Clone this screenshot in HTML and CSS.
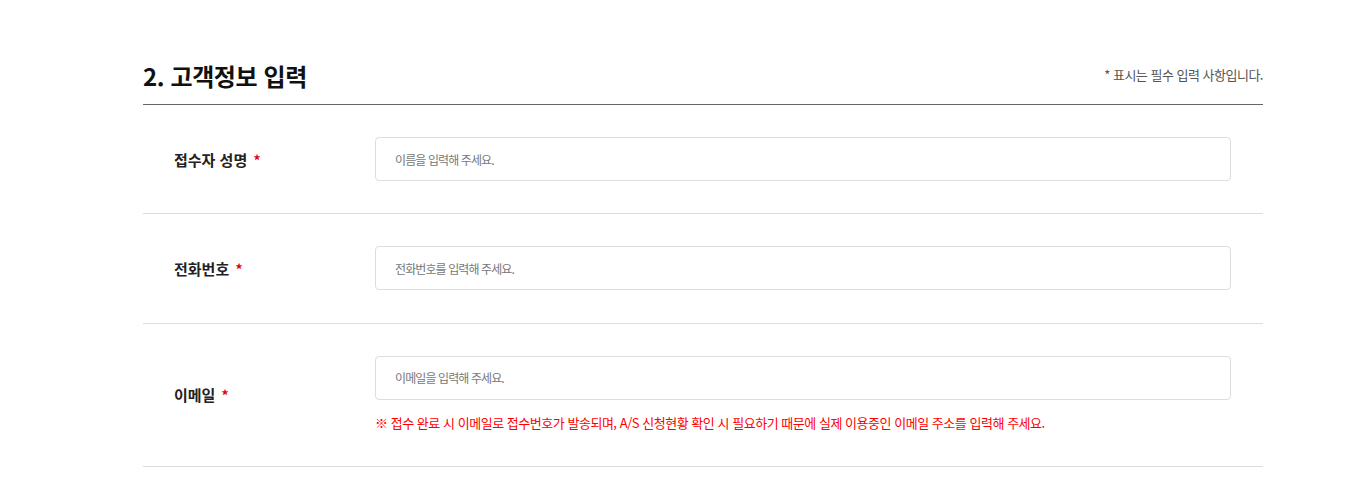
FILE: index.html
```html
<!DOCTYPE html>
<html lang="ko">
<head>
<meta charset="utf-8">
<title>고객정보 입력</title>
<link rel="stylesheet" href="styles.css">
</head>
<body>
<section class="section">
  <div class="section-head">
    <h2 class="section-title">2. 고객정보 입력</h2>
    <p class="section-note">* 표시는 필수 입력 사항입니다.</p>
  </div>
  <div class="form">
    <div class="row">
      <label class="row-label" for="name">접수자 성명 <span class="req">*</span></label>
      <div class="row-field">
        <input class="text-input" id="name" type="text" placeholder="이름을 입력해 주세요.">
      </div>
    </div>
    <div class="row">
      <label class="row-label" for="tel">전화번호 <span class="req">*</span></label>
      <div class="row-field">
        <input class="text-input" id="tel" type="text" placeholder="전화번호를 입력해 주세요.">
      </div>
    </div>
    <div class="row">
      <label class="row-label" for="email">이메일 <span class="req">*</span></label>
      <div class="row-field">
        <input class="text-input" id="email" type="text" placeholder="이메일을 입력해 주세요.">
        <p class="field-note">※ 접수 완료 시 이메일로 접수번호가 발송되며, A/S 신청현황 확인 시 필요하기 때문에 실제 이용중인 이메일 주소를 입력해 주세요.</p>
      </div>
    </div>
  </div>
</section>
</body>
</html>
```

FILE: styles.css
```css
* { box-sizing: border-box; }
html, body {
  margin: 0;
  padding: 0;
  background: #fff;
  font-family: "Noto Sans CJK KR", "Noto Sans", sans-serif;
  color: #222;
}
.section {
  width: 1120px;
  margin: 0 0 0 143px;
  padding-top: 58px;
}
.section-head {
  display: flex;
  justify-content: space-between;
  align-items: flex-end;
  padding-bottom: 10px;
  border-bottom: 1px solid #666;
}
.section-title {
  margin: 0;
  font-size: 24px;
  font-weight: 700;
  line-height: 36px;
  color: #111;
  letter-spacing: -0.4px;
}
.section-note {
  margin: 0 0 10px;
  font-size: 13px;
  line-height: 18px;
  color: #555;
  letter-spacing: -0.5px;
}
.row {
  display: grid;
  grid-template-columns: 232px 856px;
  align-items: center;
  padding: 32px 0 32.4px;
  border-bottom: 1px solid #ddd;
}
.row:last-child { padding-bottom: 33px; }
.row-label {
  padding-left: 31px;
  font-size: 15px;
  font-weight: 700;
  color: #222;
}
.req {
  margin-left: 2px;
  color: #e60012;
  font-size: 14px;
}
.row-field { display: flex; flex-direction: column; }
.text-input {
  display: block;
  width: 856px;
  height: 44px;
  padding: 0 19px;
  border: 1px solid #ddd;
  border-radius: 4px;
  background: #fff;
  font-family: inherit;
  font-size: 12px;
  letter-spacing: -0.9px;
  color: #333;
  outline: none;
}
.text-input::placeholder { color: #777; }
.field-note {
  margin: 13px 0 0;
  font-size: 13px;
  line-height: 20px;
  color: #ff0000;
  letter-spacing: -0.47px;
}
```
